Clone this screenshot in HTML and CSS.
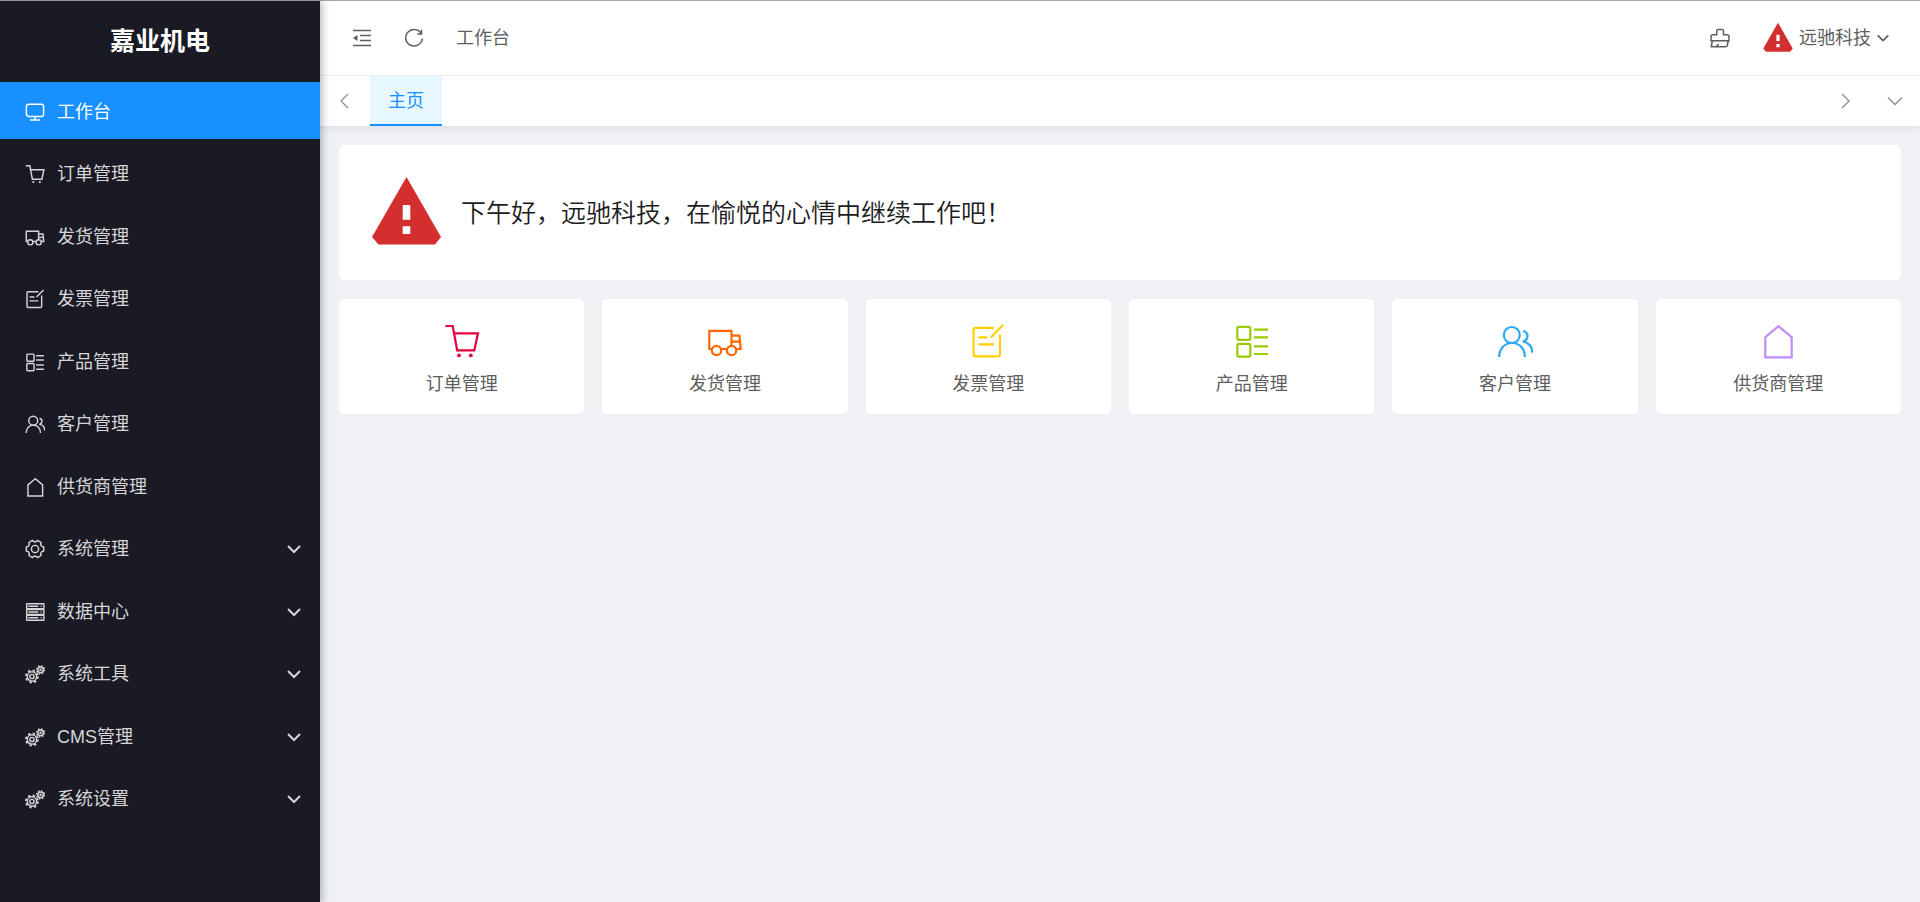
FILE: index.html
```html
<!DOCTYPE html>
<html lang="zh-CN">
<head>
<meta charset="utf-8">
<title>嘉业机电</title>
<link rel="stylesheet" href="styles.css">
</head>
<body>
<svg class="sprite" aria-hidden="true">
  <symbol id="monitor" viewBox="0 0 36 36"><rect x="2.5" y="4" width="31" height="22" rx="4"/><path d="M18 26v6.500M9 32.500h18"/></symbol>
  <symbol id="cart" viewBox="0 0 36 36"><path d="M1.5 3H8.7L13.2 27.3H30.3L34 10.3H10"/><circle class="solid" cx="15" cy="32.4" r="1.9"/><circle class="solid" cx="26.8" cy="32.4" r="1.9"/></symbol>
  <symbol id="truck" viewBox="0 0 36 36"><path d="M4.500 26H2.300V7.800H24.500V22.500M14.600 26H19.500M24.500 12.700H32.400L33.700 26H29.500M24.500 18.700H33"/><circle cx="9.500" cy="27.500" r="4.700"/><circle cx="24.600" cy="27.500" r="4.700"/></symbol>
  <symbol id="invoice" viewBox="0 0 36 36"><path d="M24 4.800H5.500Q3.600 4.800 3.600 6.800V31.300Q3.600 33.300 5.600 33.300H28Q30 33.300 30 31.300V11.500M20.800 14.600L33.300 1.800M8.300 14.400H17M8.300 21.400H24"/></symbol>
  <symbol id="product" viewBox="0 0 36 36"><rect x="3.300" y="3.800" width="13" height="13" rx="1.500"/><rect x="3.300" y="20.800" width="13" height="12.800" rx="1.500"/><path d="M20 6.700H34M20 14.300H34M20 23.300H34M20 31H34"/></symbol>
  <symbol id="users" viewBox="0 0 36 36"><circle cx="14.800" cy="12" r="8"/><path d="M2.200 34C2.200 15.300 27.900 15.300 27.900 34M26.200 8.200C32 9 32 17 25.800 18.700C31.500 19 35.300 23.500 35.300 29.800"/></symbol>
  <symbol id="house" viewBox="0 0 36 36"><path d="M18.500 3.200L5.300 14.200V34.300H31.700V14.200Z"/></symbol>
  <symbol id="gear" viewBox="0 0 36 36"><path d="M33.600 14.400V21.600L30 22.900L28.200 26L28.900 29.700L22.700 33.300L19.800 30.900H16.200L13.300 33.300L7.100 29.700L7.800 26L6 22.900L2.400 21.600V14.400L6 13.100L7.800 10L7.100 6.300L13.300 2.700L16.200 5.100H19.800L22.700 2.700L28.900 6.300L28.200 10L30 13.100Z"/><circle cx="18" cy="18" r="6.500"/></symbol>
  <symbol id="server" viewBox="0 0 36 36"><rect x="3" y="3" width="31" height="9" rx="1"/><rect x="3" y="13.500" width="31" height="9" rx="1"/><rect x="3" y="24" width="31" height="9" rx="1"/><path d="M6 7.500H24M6 18H24M6 28.500H24M28 7.500H30M28 18H30M28 28.500H30"/></symbol>
  <symbol id="gears" viewBox="0 0 36 36"><circle cx="12.500" cy="22.500" r="8.400"/><circle cx="12.500" cy="22.500" r="3.800"/><circle class="teeth" cx="12.500" cy="22.500" r="11" stroke-dasharray="4.320 4.320"/><circle cx="28" cy="10.500" r="5"/><circle cx="28" cy="10.500" r="1"/><circle class="teeth" cx="28" cy="10.500" r="7" stroke-dasharray="2.750 2.750"/></symbol>
  <symbol id="fold" viewBox="0 0 20 20"><path d="M1 2.500H19M8 7.500H19M8 12.500H19M1 17.500H19"/><path class="solid" d="M1 10L5.500 7V13Z"/></symbol>
  <symbol id="refresh" viewBox="0 0 20 20"><path d="M17.200 5.500A8.300 8.300 0 1 0 18.300 10.500M17.500 1.800V5.900H13.200"/></symbol>
  <symbol id="brush" viewBox="0 0 20 20"><path d="M1 12.700V8.500Q1 6.700 2.800 6.700H6.700V3Q6.700 1.500 8.200 1.500H12Q13.500 1.500 13.500 3V6.700H17.200Q19 6.700 19 8.500V12.700ZM2.300 12.700L1.300 18.800H15.200Q17 18.800 17.400 17L18.200 12.700M6 18.800L8.700 16"/></symbol>
  <symbol id="warning" viewBox="0 0 75 75"><path fill="#d32f2f" d="M37.500 2L72 62L66 69.500H9.500L3 62Z"/><path fill="#fff" d="M33.700 30h7.600v14.700h-7.600ZM33.700 51.300h7.600V59h-7.600Z"/></symbol>
  <symbol id="down" viewBox="0 0 16 16"><path d="M2 5L8 11L14 5"/></symbol>
  <symbol id="left" viewBox="0 0 16 16"><path d="M11 1L4 8L11 15"/></symbol>
  <symbol id="right" viewBox="0 0 16 16"><path d="M5 1L12 8L5 15"/></symbol>
  <symbol id="wide-down" viewBox="0 0 16 16"><path d="M1 4.500L8 11.500L15 4.500"/></symbol>
</svg>

<div class="app">
  <aside class="sidebar">
    <h1 class="brand">嘉业机电</h1>
    <nav>
      <ul class="menu">
        <li><a class="menu-link active" href="#" aria-current="page"><svg class="icon"><use href="#monitor"/></svg>工作台</a></li>
        <li><a class="menu-link" href="#"><svg class="icon"><use href="#cart"/></svg>订单管理</a></li>
        <li><a class="menu-link" href="#"><svg class="icon"><use href="#truck"/></svg>发货管理</a></li>
        <li><a class="menu-link" href="#"><svg class="icon"><use href="#invoice"/></svg>发票管理</a></li>
        <li><a class="menu-link" href="#"><svg class="icon"><use href="#product"/></svg>产品管理</a></li>
        <li><a class="menu-link" href="#"><svg class="icon"><use href="#users"/></svg>客户管理</a></li>
        <li><a class="menu-link" href="#"><svg class="icon"><use href="#house"/></svg>供货商管理</a></li>
        <li><a class="menu-link" href="#"><svg class="icon"><use href="#gear"/></svg>系统管理<svg class="arrow"><use href="#down"/></svg></a></li>
        <li><a class="menu-link" href="#"><svg class="icon"><use href="#server"/></svg>数据中心<svg class="arrow"><use href="#down"/></svg></a></li>
        <li><a class="menu-link" href="#"><svg class="icon"><use href="#gears"/></svg>系统工具<svg class="arrow"><use href="#down"/></svg></a></li>
        <li><a class="menu-link" href="#"><svg class="icon"><use href="#gears"/></svg>CMS管理<svg class="arrow"><use href="#down"/></svg></a></li>
        <li><a class="menu-link" href="#"><svg class="icon"><use href="#gears"/></svg>系统设置<svg class="arrow"><use href="#down"/></svg></a></li>
      </ul>
    </nav>
  </aside>

  <div class="main">
    <header class="topbar">
      <button class="tool" type="button" aria-label="折叠菜单"><svg class="tool-icon"><use href="#fold"/></svg></button>
      <button class="tool" type="button" aria-label="刷新"><svg class="tool-icon"><use href="#refresh"/></svg></button>
      <a class="crumb" href="#">工作台</a>
      <button class="tool clear" type="button" aria-label="清理缓存"><svg class="tool-icon"><use href="#brush"/></svg></button>
      <button class="user" type="button"><svg class="avatar"><use href="#warning"/></svg>远驰科技<svg class="arrow"><use href="#down"/></svg></button>
    </header>
    <div class="tabs">
      <button class="tab-nav" type="button" aria-label="向左"><svg class="tab-icon"><use href="#left"/></svg></button>
      <a class="tab" href="#">主页</a>
      <button class="tab-nav tab-next" type="button" aria-label="向右"><svg class="tab-icon"><use href="#right"/></svg></button>
      <button class="tab-nav" type="button" aria-label="更多"><svg class="tab-icon"><use href="#wide-down"/></svg></button>
    </div>
    <main class="content">
      <section class="welcome">
        <svg class="portrait"><use href="#warning"/></svg>
        <p class="greeting">下午好，远驰科技，在愉悦的心情中继续工作吧！</p>
      </section>
      <section class="shortcuts">
        <a class="shortcut" href="#"><svg class="shortcut-icon red"><use href="#cart"/></svg>订单管理</a>
        <a class="shortcut" href="#"><svg class="shortcut-icon orange"><use href="#truck"/></svg>发货管理</a>
        <a class="shortcut" href="#"><svg class="shortcut-icon yellow"><use href="#invoice"/></svg>发票管理</a>
        <a class="shortcut" href="#"><svg class="shortcut-icon green"><use href="#product"/></svg>产品管理</a>
        <a class="shortcut" href="#"><svg class="shortcut-icon blue"><use href="#users"/></svg>客户管理</a>
        <a class="shortcut" href="#"><svg class="shortcut-icon purple"><use href="#house"/></svg>供货商管理</a>
      </section>
    </main>
  </div>
</div>
</body>
</html>
```
FILE: styles.css
```css
* { box-sizing: border-box; }

body {
  margin: 0;
  background: #eff1f5;
  color: #5e5e5e;
  font: 350 18px/26px "Liberation Sans", "Noto Sans CJK SC", sans-serif;
}

a { color: inherit; text-decoration: none; }

button {
  display: flex;
  align-items: center;
  justify-content: center;
  padding: 0;
  border: 0;
  background: none;
  color: inherit;
  font: inherit;
  cursor: pointer;
}

svg {
  flex: none;
  fill: none;
  stroke: currentColor;
  stroke-width: 2;
}

.sprite { position: absolute; width: 0; height: 0; }
.solid { fill: currentColor; stroke: none; }
.teeth { stroke-width: 3; }

.app {
  display: flex;
  min-height: 100vh;
  border-top: 1px solid #a6a6ae;
}

/* Sidebar */
.sidebar {
  z-index: 1;
  flex: none;
  width: 320px;
  background: #191a23;
  box-shadow: 2px 0 8px rgba(0, 21, 41, 0.3);
}

.brand {
  margin: 0;
  color: #fff;
  font-size: 25px;
  font-weight: 700;
  line-height: 81px;
  text-align: center;
}

.menu { margin: 0; padding: 0; list-style: none; }
.menu li { margin-bottom: 5px; }
.menu li:nth-child(even) { margin-bottom: 6px; }

.menu-link {
  display: flex;
  align-items: center;
  gap: 12px;
  height: 57px;
  padding: 2px 18px 0 25px;
  color: #d6d6d8;
  font-weight: 400;
}

.menu-link.active { background: #1890ff; color: #fff; }
.menu-link .arrow { margin-left: auto; }
.icon { width: 20px; height: 20px; stroke-width: 2.6; }
.arrow { width: 16px; height: 16px; }

/* Top bar */
.main { flex: 1; min-width: 0; }

.topbar {
  display: flex;
  align-items: center;
  gap: 32px;
  height: 75px;
  padding: 0 30px 0 32px;
  border-bottom: 1px solid #f0f1f3;
  background: #fff;
  font-weight: 400;
}

.tool-icon { width: 20px; height: 20px; stroke-width: 1.5; }
.clear { margin-left: auto; }
.user { gap: 5px; }
.user .arrow { width: 14px; height: 14px; }
.avatar { width: 32px; height: 32px; stroke: none; }

.tabs {
  display: flex;
  height: 50px;
  background: #fff;
  box-shadow: 0 2px 6px rgba(0, 21, 41, 0.08);
  font-weight: 400;
}

.tab-nav { width: 50px; color: #8c8c8c; }
.tab-next { margin-left: auto; }
.tab-icon { width: 16px; height: 16px; stroke-width: 1.3; }

.tab {
  display: flex;
  align-items: center;
  padding: 2px 18px 0;
  border-bottom: 2px solid #1890ff;
  background: #e6f7ff;
  color: #1890ff;
}

/* Workspace */
.content { padding: 19px; }

.welcome {
  display: flex;
  align-items: center;
  gap: 17px;
  padding: 30px;
  border-radius: 5px;
  background: #fff;
}

.portrait { width: 75px; height: 75px; stroke: none; }

.greeting {
  margin: 0;
  color: #1c1c1c;
  font-size: 25px;
  line-height: 36px;
}

.shortcuts {
  display: grid;
  grid-template-columns: repeat(6, 1fr);
  gap: 18px;
  margin-top: 19px;
}

.shortcut {
  display: flex;
  flex-direction: column;
  align-items: center;
  gap: 12px;
  padding: 24px 0 17px;
  border-radius: 5px;
  background: #fff;
  font-weight: 400;
}

.shortcut-icon { width: 36px; height: 36px; stroke-width: 2.2; }
.red { color: #e6003e; }
.orange { color: #ff6600; }
.yellow { color: #ffd000; }
.green { color: #99cc00; }
.blue { color: #2caaf2; }
.purple { color: #bf8cf8; }
```
